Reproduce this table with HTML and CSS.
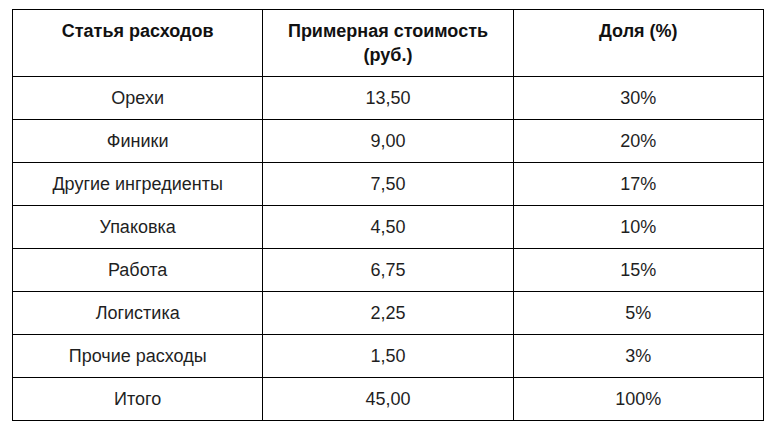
FILE: index.html
```html
<!DOCTYPE html>
<html lang="ru">
<head>
<meta charset="utf-8">
<link rel="stylesheet" href="styles.css">
</head>
<body>
<table class="costs">
  <colgroup><col class="c"><col class="c"><col class="c"></colgroup>
  <thead>
    <tr><th>Статья расходов</th><th>Примерная стоимость (руб.)</th><th>Доля (%)</th></tr>
  </thead>
  <tbody>
    <tr><td>Орехи</td><td>13,50</td><td>30%</td></tr>
    <tr><td>Финики</td><td>9,00</td><td>20%</td></tr>
    <tr><td>Другие ингредиенты</td><td>7,50</td><td>17%</td></tr>
    <tr><td>Упаковка</td><td>4,50</td><td>10%</td></tr>
    <tr><td>Работа</td><td>6,75</td><td>15%</td></tr>
    <tr><td>Логистика</td><td>2,25</td><td>5%</td></tr>
    <tr><td>Прочие расходы</td><td>1,50</td><td>3%</td></tr>
    <tr><td>Итого</td><td>45,00</td><td>100%</td></tr>
  </tbody>
</table>
</body>
</html>
```
FILE: styles.css
```css
html, body {
  margin: 0;
  background: #ffffff;
}
body {
  padding: 9px 12px;
  font-family: "Liberation Sans", Arial, sans-serif;
  font-size: 18px;
  color: #1f1f1f;
}
.costs {
  border-collapse: collapse;
  width: 752px;
  table-layout: fixed;
}
.costs .c {
  width: 250px;
}
.costs th,
.costs td {
  border: 1px solid #000;
  padding: 9px 12px;
  line-height: 24px;
  text-align: center;
  vertical-align: top;
}
.costs th {
  font-weight: bold;
  color: #111;
}
```
